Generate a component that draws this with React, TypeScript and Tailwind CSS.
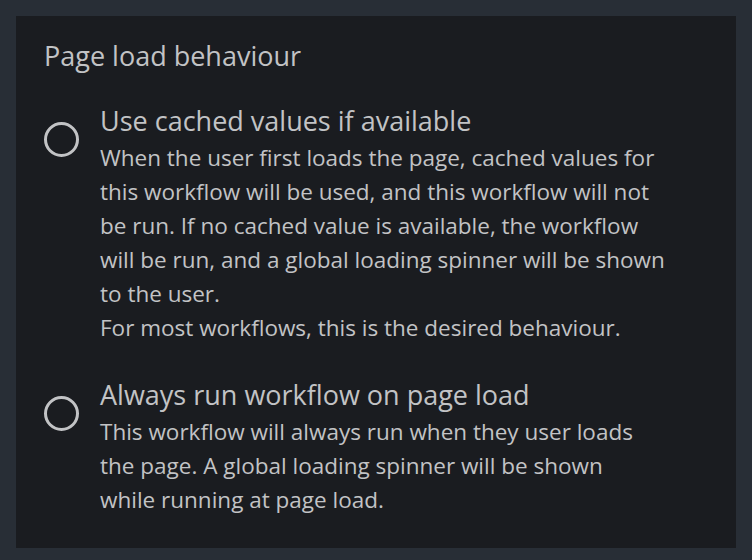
const options = [
  {
    title: "Use cached values if available",
    lines: [
      "When the user first loads the page, cached values for",
      "this workflow will be used, and this workflow will not",
      "be run. If no cached value is available, the workflow",
      "will be run, and a global loading spinner will be shown",
      "to the user.",
      "For most workflows, this is the desired behaviour.",
    ],
  },
  {
    title: "Always run workflow on page load",
    lines: [
      "This workflow will always run when they user loads",
      "the page. A global loading spinner will be shown",
      "while running at page load.",
    ],
  },
];

export default function App() {
  return (
    <div
      className="min-h-[560px] w-[752px] bg-[#282e36] p-4"
      style={{ fontFamily: "'Open Sans', 'Noto Sans', sans-serif" }}
    >
      <div className="h-[532px] bg-[#1a1c20] px-7 pt-[20px] text-[#c2c3c5]">
        <h2 className="text-[27px] leading-[40px]">Page load behaviour</h2>
        <div className="mt-[27px] flex flex-col gap-[32px]">
          {options.map((o) => (
            <label key={o.title} className="flex items-start gap-[21px]">
              <span className="mt-[19px] h-[35px] w-[35px] shrink-0 rounded-full border-[3px] border-[#c2c3c5]" />
              <span className="flex flex-col whitespace-nowrap">
                <span className="mb-[2px] text-[27px] leading-[36px]">{o.title}</span>
                {o.lines.map((l) => (
                  <span key={l} className="text-[22.5px] leading-[34px]">
                    {l}
                  </span>
                ))}
              </span>
            </label>
          ))}
        </div>
      </div>
    </div>
  );
}
